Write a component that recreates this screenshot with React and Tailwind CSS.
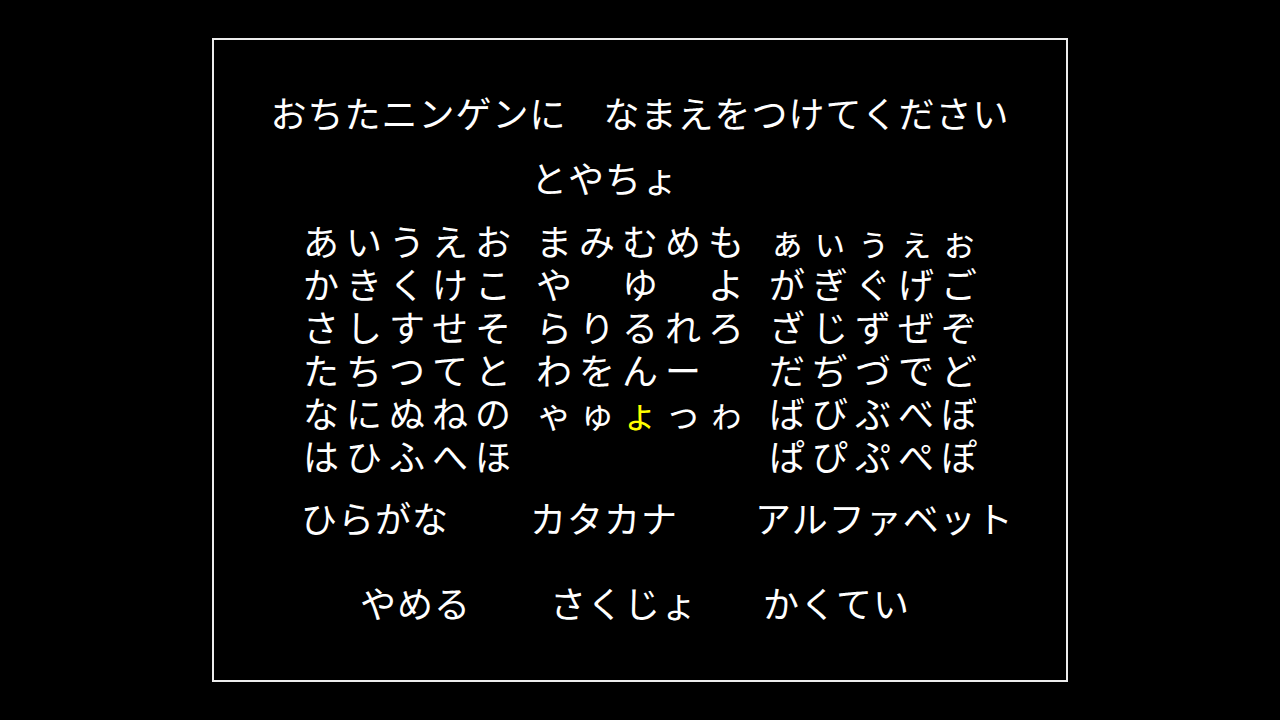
import React from "react"

const font = { fontFamily: '"Noto Sans CJK JP", "Noto Sans", sans-serif' }

const columns = [
  [
    ["あ", "い", "う", "え", "お"],
    ["か", "き", "く", "け", "こ"],
    ["さ", "し", "す", "せ", "そ"],
    ["た", "ち", "つ", "て", "と"],
    ["な", "に", "ぬ", "ね", "の"],
    ["は", "ひ", "ふ", "へ", "ほ"],
  ],
  [
    ["ま", "み", "む", "め", "も"],
    ["や", "", "ゆ", "", "よ"],
    ["ら", "り", "る", "れ", "ろ"],
    ["わ", "を", "ん", "ー", ""],
    ["ゃ", "ゅ", "ょ", "っ", "ゎ"],
    ["", "", "", "", ""],
  ],
  [
    ["ぁ", "ぃ", "ぅ", "ぇ", "ぉ"],
    ["が", "ぎ", "ぐ", "げ", "ご"],
    ["ざ", "じ", "ず", "ぜ", "ぞ"],
    ["だ", "ぢ", "づ", "で", "ど"],
    ["ば", "び", "ぶ", "べ", "ぼ"],
    ["ぱ", "ぴ", "ぷ", "ぺ", "ぽ"],
  ],
]

// selected letter in the grid (column, row, cell)
const selected = { col: 1, row: 4, cell: 2 }

const LetterColumn = ({ rows, colIndex }) => (
  <div className="flex flex-col">
    {rows.map((row, r) => (
      <div key={r} className="flex h-[43px]">
        {row.map((ch, c) => {
          const isSel = colIndex === selected.col && r === selected.row && c === selected.cell
          return (
            <span
              key={c}
              className={`w-[43px] h-[43px] flex items-center justify-center leading-none text-[36px] ${isSel ? "text-[#ffff00]" : "text-white"}`}
            >
              {ch}
            </span>
          )
        })}
      </div>
    ))}
  </div>
)

export default function App() {
  return (
    <div className="w-[1280px] h-[720px] bg-black overflow-hidden" style={font}>
      <div className="mx-auto mt-[38px] w-[856px] h-[644px] border-2 border-[#ececec] flex flex-col text-white">
        <p className="mt-[52px] h-[40px] flex items-center justify-center leading-none text-[36px] tracking-[1px] whitespace-pre">
          おちたニンゲンに　なまえをつけてください
        </p>

        <p className="mt-[25px] h-[40px] flex items-center leading-none text-[36px] tracking-[1px] pl-[317px]">とやちょ</p>

        <div className="mt-[21px] flex justify-center gap-[18px]">
          {columns.map((rows, i) => (
            <LetterColumn key={i} rows={rows} colIndex={i} />
          ))}
        </div>

        <div className="mt-[21px] h-[40px] flex items-center leading-none text-[36px] tracking-[1px] pl-[87px]">
          <span className="w-[229px]">ひらがな</span>
          <span className="w-[225px]">カタカナ</span>
          <span>アルファベット</span>
        </div>

        <div className="mt-[45px] h-[40px] flex items-center leading-none text-[36px] tracking-[1px] pl-[146px]">
          <span className="w-[190px]">やめる</span>
          <span className="w-[213px]">さくじょ</span>
          <span>かくてい</span>
        </div>
      </div>
    </div>
  )
}
